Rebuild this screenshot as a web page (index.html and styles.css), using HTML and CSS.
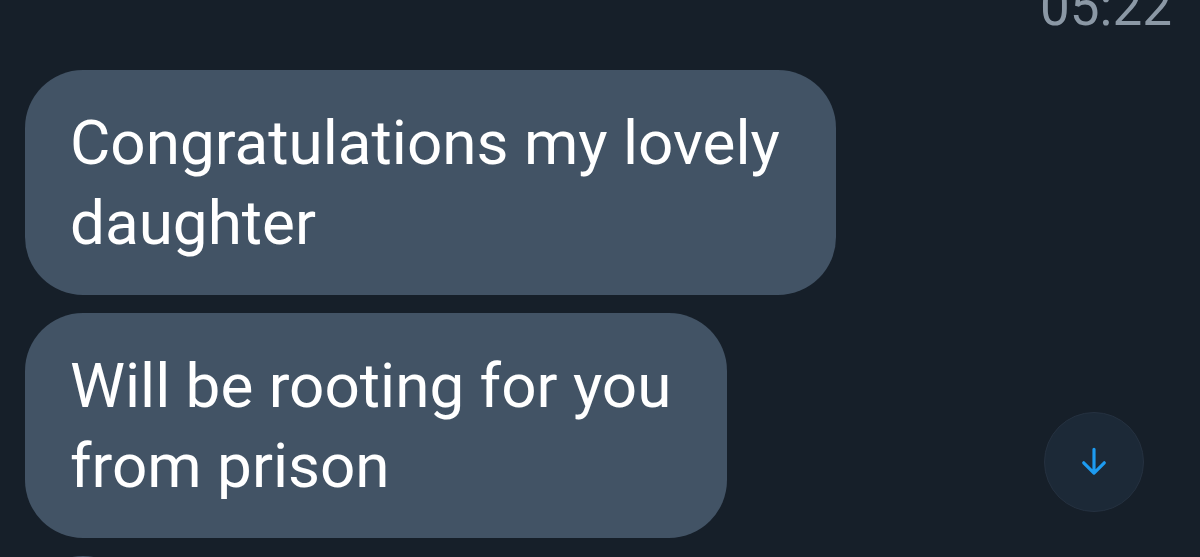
FILE: index.html
```html
<!DOCTYPE html>
<html lang="en">

<head>
    <meta charset="UTF-8">
    <meta name="viewport" content="width=device-width, initial-scale=1.0">
    <title>Messages</title>
    <link rel="stylesheet" href="styles.css">
</head>

<body>
    <div class="chat">
        <!-- Hora da mensagem -->
        <div class="time">05:22</div>

        <div class="bubble">Congratulations my lovely<br>daughter</div>
        <div class="bubble">Will be rooting for you<br>from prison</div>
        <div class="bubble">&nbsp;</div>
    </div>

    <!-- Botão de rolar para baixo -->
    <button class="scroll-down" aria-label="Scroll down">
        <svg viewBox="0 0 24 24" width="38" height="38">
            <path d="M12 4v15M5.5 12.5L12 19l6.5-6.5" fill="none" stroke="#1d9bf0" stroke-width="2"
                stroke-linecap="round" stroke-linejoin="round" />
        </svg>
    </button>
</body>

</html>
```

FILE: styles.css
```css
/* Estilos Gerais */
body,
html {
    margin: 0;
    padding: 0;
    height: 100%;
    overflow: hidden;
    background: #161f29;
    font-family: Roboto, 'Noto Sans', sans-serif;
}

/* Conversa */
.chat {
    display: flex;
    flex-direction: column;
    align-items: flex-start;
    gap: 18px;
    padding: 0 28px 0 25px;
    margin-top: -21px;
}

.time {
    align-self: flex-end;
    color: #8b98a5;
    font-size: 53px;
    line-height: 56px;
    margin-bottom: 17px;
}

.bubble {
    background-color: #425365;
    color: #ffffff;
    font-size: 62px;
    line-height: 80px;
    padding: 33px 56px 32px 45px;
    border-radius: 58px;
}

/* Botão de rolar para baixo */
.scroll-down {
    position: absolute;
    left: 1044px;
    top: 412px;
    width: 100px;
    height: 100px;
    border-radius: 50%;
    background-color: #1c2937;
    border: 1px solid #253140;
    display: flex;
    align-items: center;
    justify-content: center;
    padding: 0;
}
```
